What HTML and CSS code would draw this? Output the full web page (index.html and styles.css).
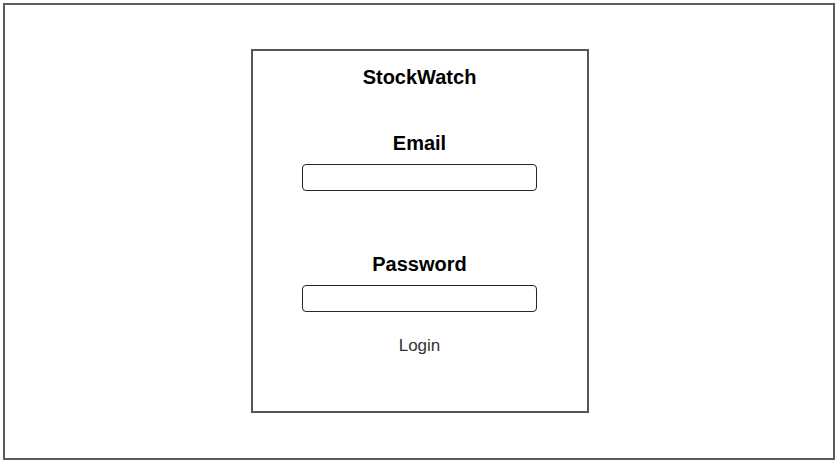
FILE: index.html
```html
<!DOCTYPE html>
<html lang="en">
<head>
<meta charset="utf-8">
<title>StockWatch</title>
<link rel="stylesheet" href="styles.css">
</head>
<body>
<div class="frame">
  <form class="card">
    <div class="title">StockWatch</div>
    <label class="label label-email">Email</label>
    <div class="field"></div>
    <label class="label label-password">Password</label>
    <div class="field"></div>
    <div class="login">Login</div>
  </form>
</div>
</body>
</html>
```
FILE: styles.css
```css
html, body {
  margin: 0;
  padding: 0;
  background: #ffffff;
}
body {
  width: 837px;
  height: 462px;
  overflow: hidden;
  font-family: "Liberation Sans", Arial, sans-serif;
  color: #000;
}
.frame {
  box-sizing: border-box;
  margin: 3px 0 0 3px;
  width: 832px;
  height: 457px;
  border: 2px solid #5c5c5c;
  padding-top: 44px;
  display: flex;
  flex-direction: column;
  align-items: center;
}
.card {
  box-sizing: border-box;
  margin: 0 0 0 1px;
  width: 338px;
  height: 364px;
  border: 2px solid #555555;
  padding-top: 15px;
  display: flex;
  flex-direction: column;
  align-items: center;
}
.title {
  font-size: 20px;
  font-weight: bold;
  line-height: 23px;
  height: 23px;
}
.label {
  display: block;
  font-size: 20px;
  font-weight: bold;
  line-height: 23px;
  height: 23px;
}
.label-email {
  margin-top: 43px;
}
.label-password {
  margin-top: 62px;
}
.field {
  box-sizing: border-box;
  width: 235px;
  height: 27px;
  margin-top: 9px;
  border: 1.5px solid #262626;
  border-radius: 4px;
  background: #fff;
}
.login {
  margin-top: 24px;
  font-size: 17px;
  line-height: 20px;
  color: #333333;
}
```
